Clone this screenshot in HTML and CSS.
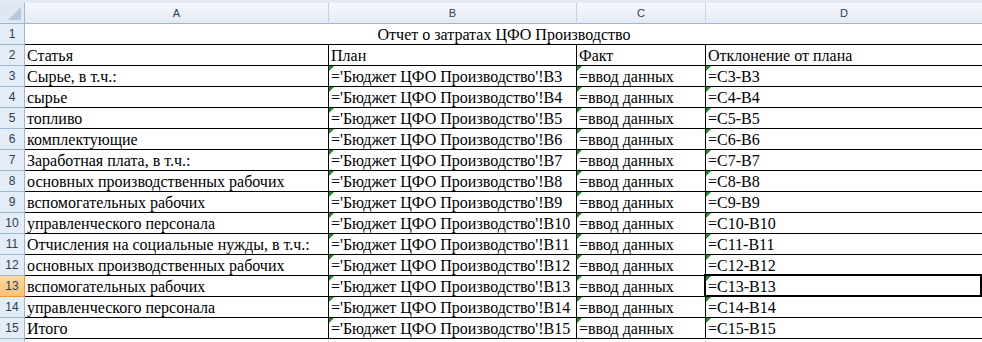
FILE: index.html
```html
<!DOCTYPE html>
<html lang="ru">
<head>
    <meta charset="UTF-8">
    <meta name="viewport" content="width=device-width, initial-scale=1.0">
    <title>Отчет о затратах ЦФО Производство</title>
    <link rel="stylesheet" href="styles.css">
</head>
<body>

    <div class="sheet">
        <table class="grid">
            <colgroup>
                <col class="col-head">
                <col class="col-a">
                <col class="col-b">
                <col class="col-c">
                <col class="col-d">
            </colgroup>
            <thead>
                <tr class="letters">
                    <th class="corner"><span class="corner-mark"></span></th>
                    <th>A</th>
                    <th>B</th>
                    <th>C</th>
                    <th>D</th>
                </tr>
            </thead>
            <tbody>
                <tr>
                    <th class="num">1</th>
                    <td colspan="4" class="title">Отчет о затратах ЦФО Производство</td>
                </tr>
                <tr class="boxed">
                    <th class="num">2</th>
                    <td>Статья</td>
                    <td>План</td>
                    <td>Факт</td>
                    <td>Отклонение от плана</td>
                </tr>
                <tr class="boxed">
                    <th class="num">3</th>
                    <td>Сырье, в т.ч.:</td>
                    <td class="warn">='Бюджет ЦФО Производство'!B3</td>
                    <td class="warn">=ввод данных</td>
                    <td class="warn">=C3-B3</td>
                </tr>
                <tr class="boxed">
                    <th class="num">4</th>
                    <td>сырье</td>
                    <td class="warn">='Бюджет ЦФО Производство'!B4</td>
                    <td class="warn">=ввод данных</td>
                    <td class="warn">=C4-B4</td>
                </tr>
                <tr class="boxed">
                    <th class="num">5</th>
                    <td>топливо</td>
                    <td class="warn">='Бюджет ЦФО Производство'!B5</td>
                    <td class="warn">=ввод данных</td>
                    <td class="warn">=C5-B5</td>
                </tr>
                <tr class="boxed">
                    <th class="num">6</th>
                    <td>комплектующие</td>
                    <td class="warn">='Бюджет ЦФО Производство'!B6</td>
                    <td class="warn">=ввод данных</td>
                    <td class="warn">=C6-B6</td>
                </tr>
                <tr class="boxed">
                    <th class="num">7</th>
                    <td>Заработная плата, в т.ч.:</td>
                    <td class="warn">='Бюджет ЦФО Производство'!B7</td>
                    <td class="warn">=ввод данных</td>
                    <td class="warn">=C7-B7</td>
                </tr>
                <tr class="boxed">
                    <th class="num">8</th>
                    <td>основных производственных рабочих</td>
                    <td class="warn">='Бюджет ЦФО Производство'!B8</td>
                    <td class="warn">=ввод данных</td>
                    <td class="warn">=C8-B8</td>
                </tr>
                <tr class="boxed">
                    <th class="num">9</th>
                    <td>вспомогательных рабочих</td>
                    <td class="warn">='Бюджет ЦФО Производство'!B9</td>
                    <td class="warn">=ввод данных</td>
                    <td class="warn">=C9-B9</td>
                </tr>
                <tr class="boxed">
                    <th class="num">10</th>
                    <td>управленческого персонала</td>
                    <td class="warn">='Бюджет ЦФО Производство'!B10</td>
                    <td class="warn">=ввод данных</td>
                    <td class="warn">=C10-B10</td>
                </tr>
                <tr class="boxed">
                    <th class="num">11</th>
                    <td>Отчисления на социальные нужды, в т.ч.:</td>
                    <td class="warn">='Бюджет ЦФО Производство'!B11</td>
                    <td class="warn">=ввод данных</td>
                    <td class="warn">=C11-B11</td>
                </tr>
                <tr class="boxed">
                    <th class="num">12</th>
                    <td>основных производственных рабочих</td>
                    <td class="warn">='Бюджет ЦФО Производство'!B12</td>
                    <td class="warn">=ввод данных</td>
                    <td class="warn">=C12-B12</td>
                </tr>
                <tr class="boxed">
                    <th class="num active">13</th>
                    <td>вспомогательных рабочих</td>
                    <td class="warn">='Бюджет ЦФО Производство'!B13</td>
                    <td class="warn">=ввод данных</td>
                    <td class="warn selected">=C13-B13<span class="cursor"></span></td>
                </tr>
                <tr class="boxed">
                    <th class="num">14</th>
                    <td>управленческого персонала</td>
                    <td class="warn">='Бюджет ЦФО Производство'!B14</td>
                    <td class="warn">=ввод данных</td>
                    <td class="warn">=C14-B14</td>
                </tr>
                <tr class="boxed">
                    <th class="num">15</th>
                    <td>Итого</td>
                    <td class="warn">='Бюджет ЦФО Производство'!B15</td>
                    <td class="warn">=ввод данных</td>
                    <td class="warn">=C15-B15</td>
                </tr>
                <tr>
                    <th class="num"></th>
                    <td></td>
                    <td></td>
                    <td></td>
                    <td></td>
                </tr>
            </tbody>
        </table>
    </div>

</body>
</html>
```

FILE: styles.css
```css
* {
    margin: 0;
    padding: 0;
    box-sizing: border-box;
}

body {
    background: #fff;
    overflow: hidden;
    width: 982px;
    height: 342px;
}

.sheet {
    border-top: 3px solid #e3eaf4;
    width: 983px;
}

.grid {
    border-collapse: separate;
    border-spacing: 0;
    table-layout: fixed;
    width: 983px;
}

.col-head { width: 25px; }
.col-a { width: 304px; }
.col-b { width: 248px; }
.col-c { width: 129px; }
.col-d { width: 277px; }

/* Column letters */
.letters {
    height: 21px;
}

.letters th {
    font-family: 'Liberation Sans', Arial, sans-serif;
    font-size: 11px;
    font-weight: normal;
    color: #2c3d55;
    text-align: center;
    background: linear-gradient(#f6f8fb, #e4eaf3);
    border-right: 1px solid #c5d3e3;
    border-bottom: 1px solid #9eb6ce;
    vertical-align: middle;
}

.letters .corner {
    position: relative;
    background: #dfe7f2;
    border-right: 1px solid #9eb6ce;
}

.corner-mark {
    position: absolute;
    right: 3px;
    bottom: 3px;
    border-left: 13px solid transparent;
    border-bottom: 13px solid #b8c8dc;
}

/* Sheet rows */
tbody tr {
    height: 21px;
}

.num {
    font-family: 'Liberation Sans', Arial, sans-serif;
    font-size: 12px;
    font-weight: normal;
    color: #2c3d55;
    text-align: center;
    vertical-align: middle;
    background: #e4ecf7;
    border-right: 1px solid #9eb6ce;
    border-bottom: 1px solid #9eb6ce;
}

.num.active {
    background: linear-gradient(#fbd9a1, #f6c374);
    border-bottom-color: #f29536;
    border-right-color: #f29536;
}

td {
    position: relative;
    font-family: 'Liberation Serif', 'Times New Roman', serif;
    font-size: 16px;
    line-height: 18px;
    color: #000;
    padding: 0 1px 0 2px;
    white-space: nowrap;
    overflow: hidden;
    vertical-align: bottom;
    border-right: 1px solid #d0d7e5;
    border-bottom: 1px solid #d0d7e5;
}

.title {
    text-align: center;
    border-bottom-color: #000;
}

.boxed td {
    border-right-color: #000;
    border-bottom-color: #000;
}

/* Green error indicator in the top-left corner */
.warn::before {
    content: '';
    position: absolute;
    left: 0;
    top: 0;
    border-top: 5px solid #18901b;
    border-right: 5px solid transparent;
}

.selected {
    overflow: visible;
}

.cursor {
    position: absolute;
    left: -2px;
    top: -2px;
    right: 0;
    bottom: -1px;
    border: 2px solid #000;
    pointer-events: none;
}
```
